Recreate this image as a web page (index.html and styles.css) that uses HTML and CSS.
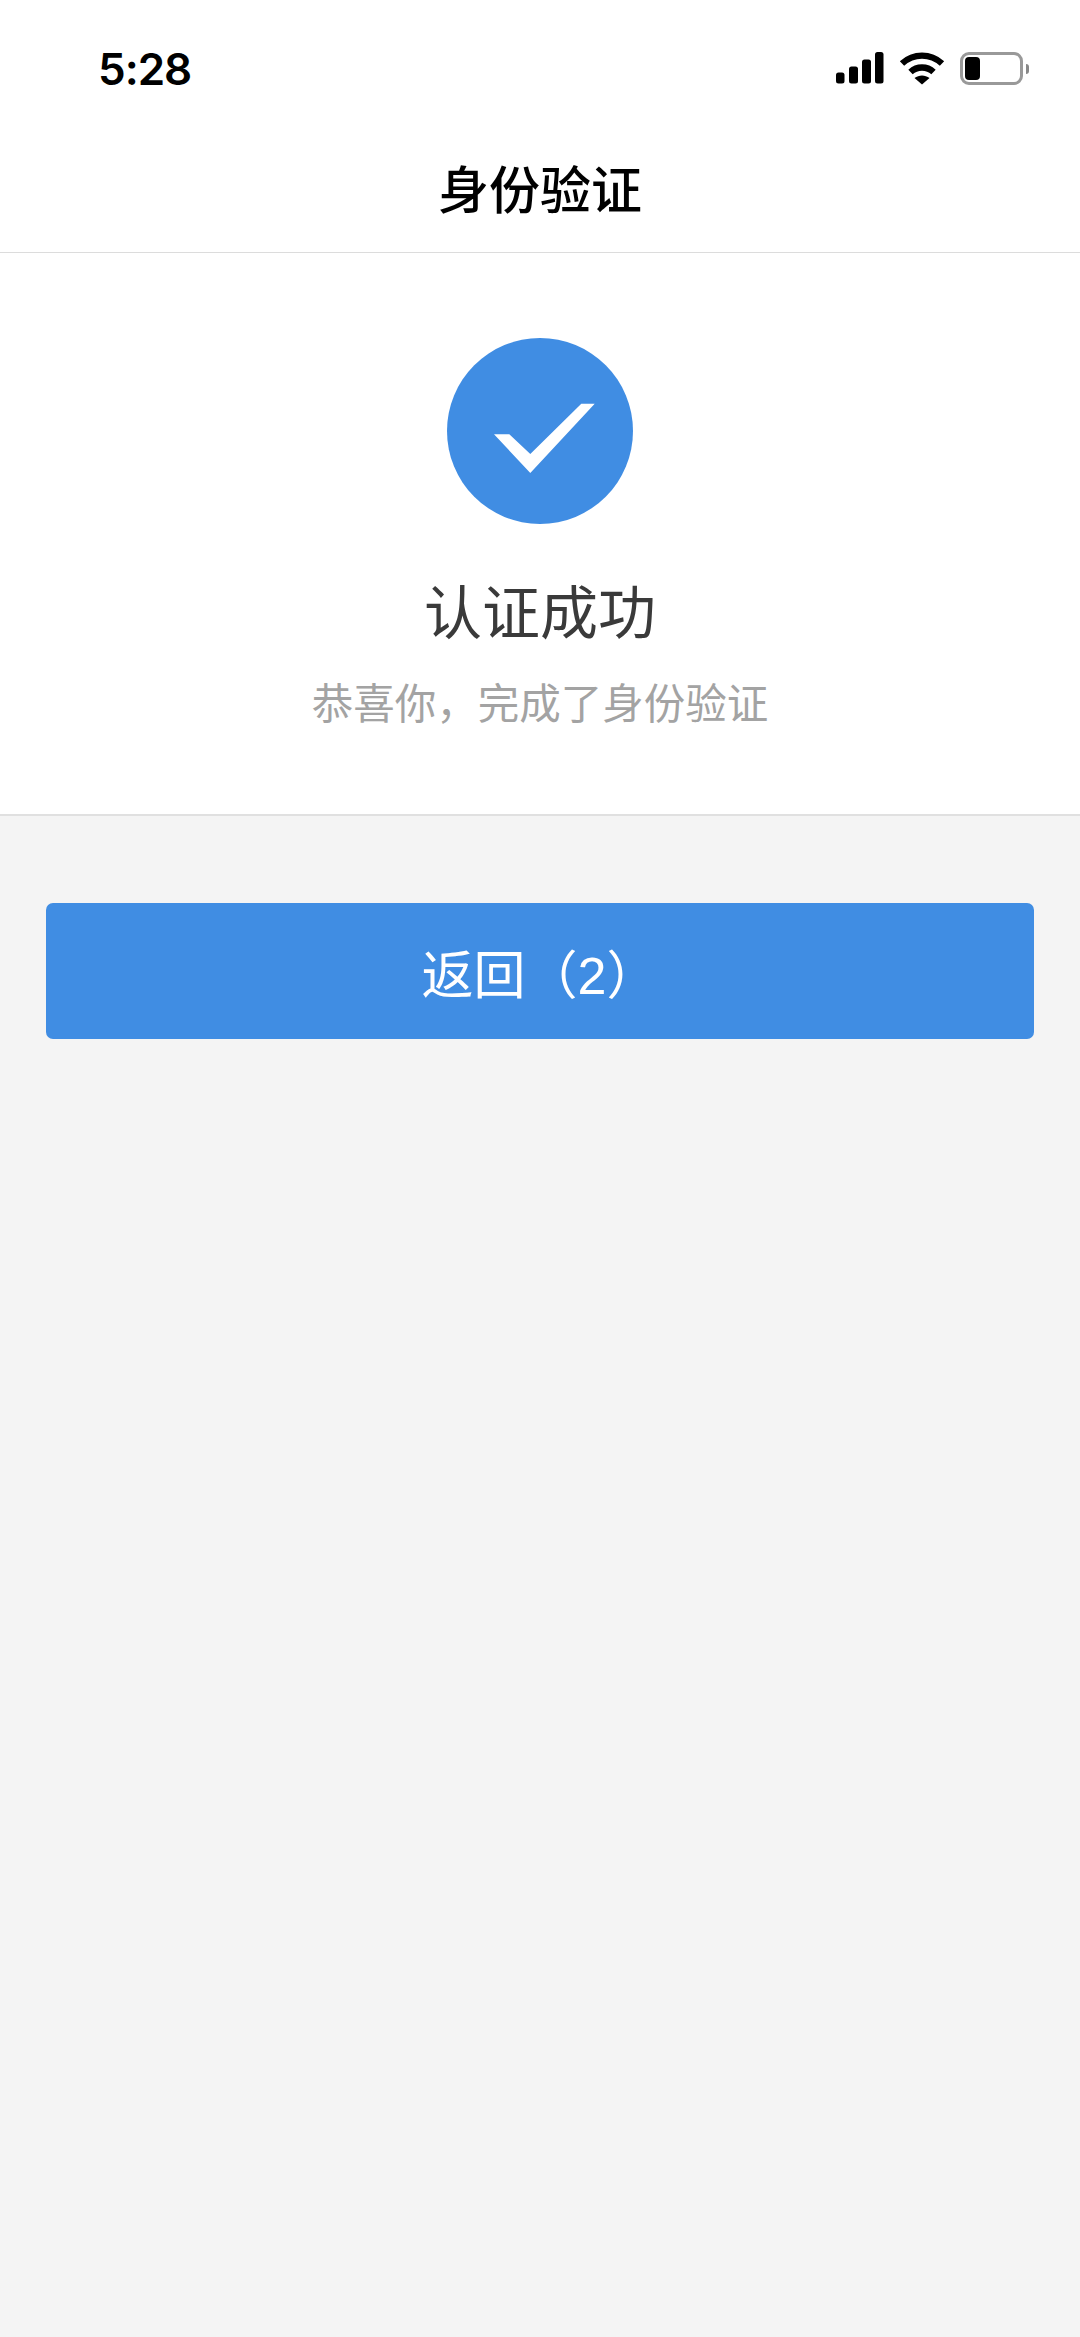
FILE: index.html
```html
<!DOCTYPE html>
<html lang="zh-CN">
<head>
    <meta charset="UTF-8">
    <meta name="viewport" content="width=device-width, initial-scale=1.0">
    <title>身份验证</title>
    <link rel="stylesheet" href="styles.css">
</head>
<body>
    <header class="top-bar">
        <div class="status-bar">
            <span class="time">5:28</span>
            <div class="status-icons">
                <svg class="signal" width="48" height="32" viewBox="0 0 48 32">
                    <rect x="0" y="20.5" width="8.5" height="11" rx="2.5"/>
                    <rect x="13" y="14.5" width="9" height="17" rx="2.5"/>
                    <rect x="26" y="7.5" width="9" height="24" rx="2.5"/>
                    <rect x="39" y="0" width="8.5" height="31.5" rx="2.5"/>
                </svg>
                <svg class="wifi" width="46" height="34" viewBox="0 0 46 34">
                    <path d="M3 12.5C14.5 2 31.5 2 43 12.5" fill="none" stroke="#000" stroke-width="6.4"/>
                    <path d="M11.5 21C18 15 28 15 34.5 21" fill="none" stroke="#000" stroke-width="6.4"/>
                    <path d="M15.5 27C20 23.5 26 23.5 30.5 27L23 33.5Z"/>
                </svg>
                <div class="battery">
                    <div class="battery-body"><div class="battery-level"></div></div>
                    <div class="battery-nub"></div>
                </div>
            </div>
        </div>
        <h1 class="nav-title">身份验证</h1>
    </header>

    <section class="result-card">
        <svg class="result-icon" width="186" height="186" viewBox="0 0 186 186">
            <circle cx="93" cy="93" r="93" fill="#408de3"/>
            <path d="M47 96.3H62.3L83.3 116L134.3 65.7H147.7L83.3 135Z" fill="#fff"/>
        </svg>
        <h2 class="result-title">认证成功</h2>
        <p class="result-desc">恭喜你，完成了身份验证</p>
    </section>

    <div class="actions">
        <button class="back-button">返回（2）</button>
    </div>
</body>
</html>
```

FILE: styles.css
```css
/* Basic styles */
body {
    margin: 0;
    height: 2337px;
    overflow: hidden;
    background-color: #f4f4f4;
    font-family: "Noto Sans CJK SC", "Liberation Sans", sans-serif;
}

.top-bar {
    height: 252px;
    background: #fff;
    border-bottom: 1px solid #dcdcdc;
}
.status-bar {
    height: 136px;
    display: flex;
    align-items: flex-start;
    justify-content: space-between;
    padding: 0 51px 0 98px;
}
.time {
    margin-top: 41px;
    font-family: Inter, "Liberation Sans", sans-serif;
    font-size: 44px;
    line-height: 56px;
    font-weight: 600;
    letter-spacing: -1px;
    color: #000;
}
.status-icons {
    display: flex;
    align-items: flex-start;
    margin-top: 52px;
}
.wifi {
    margin-left: 15px;
    margin-top: -1px;
}
.battery {
    display: flex;
    align-items: center;
    margin-left: 15px;
}
.battery-body {
    box-sizing: border-box;
    width: 63px;
    height: 33px;
    padding: 2px;
    border: 3px solid #999;
    border-radius: 9px;
}
.battery-level {
    width: 15px;
    height: 23px;
    background: #000;
    border-radius: 4px;
}
.battery-nub {
    width: 3px;
    height: 10px;
    margin-left: 3px;
    background: #888;
    border-radius: 0 3px 3px 0;
}
.nav-title {
    margin: 0;
    height: 116px;
    text-align: center;
    font-size: 51px;
    line-height: 102px;
    font-weight: 500;
    color: #000;
}

.result-card {
    height: 561px;
    display: flex;
    flex-direction: column;
    align-items: center;
    background: #fff;
    border-bottom: 2px solid #e0e0e0;
}
.result-icon {
    margin-top: 85px;
}
.result-title {
    margin: 50px 0 0;
    font-size: 58px;
    line-height: 70px;
    font-weight: 400;
    color: #3a3a3a;
}
.result-desc {
    margin: 30px 0 0;
    font-size: 41.5px;
    line-height: 54px;
    color: #a3a3a3;
}

.actions {
    padding: 87px 46px 0;
}
.back-button {
    display: block;
    width: 100%;
    height: 136px;
    padding: 0;
    border: none;
    border-radius: 7px;
    background-color: #408de3;
    color: #fff;
    font-family: "Liberation Sans", "Noto Sans CJK SC", sans-serif;
    font-size: 52px;
}
```
